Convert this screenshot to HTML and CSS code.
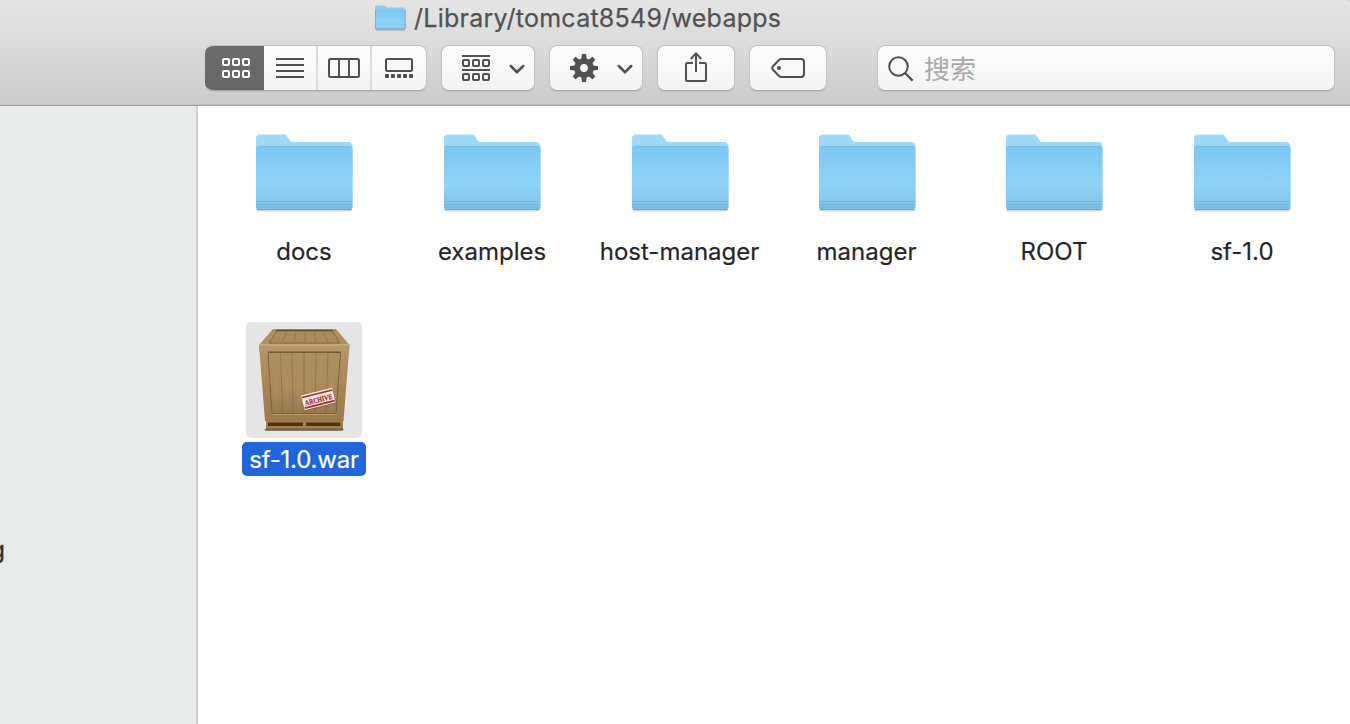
FILE: index.html
```
<!DOCTYPE html>
<html lang="zh">
<head>
<meta charset="utf-8">
<title>webapps</title>
<link rel="stylesheet" href="styles.css">
</head>
<body>
<svg class="defs" aria-hidden="true">
  <defs>
    <linearGradient id="front" x1="0" y1="0" x2="0" y2="1">
      <stop offset="0" stop-color="#7cc6f2"/><stop offset=".6" stop-color="#8fd3f7"/><stop offset=".78" stop-color="#8acbf0"/><stop offset="1" stop-color="#7dbfe6"/>
    </linearGradient>
    <linearGradient id="wood" x1="0" y1="0" x2="0" y2="1">
      <stop offset="0" stop-color="#ae8f61"/><stop offset=".6" stop-color="#ab8b5c"/><stop offset="1" stop-color="#987850"/>
    </linearGradient>
    <linearGradient id="frame" x1="0" y1="0" x2="0" y2="1">
      <stop offset="0" stop-color="#b59566"/><stop offset="1" stop-color="#9b7a4b"/>
    </linearGradient>
    <symbol id="folder" viewBox="0 0 100 80">
      <path d="M3 75.500H97Q98.500 78 96 78.500H4Q1.500 78 3 75.500Z" fill="#000" opacity=".13"/>
      <path d="M2 5.500Q2 1.500 6 1.500H30C34.500 1.500 34 9 39 9H94Q98.500 9 98.500 13.500V70H2Z" fill="#a0daf9"/>
      <path d="M2 16Q2 13 5 13H95.500Q98.500 13 98.500 16V74Q98.500 77 95.500 77H5Q2 77 2 74Z" fill="url(#front)"/>
      <path d="M4 13.400H96.500" stroke="#74b9e2" stroke-width=".8"/>
      <path d="M2 68.500H98.500M2 71.500H98.500M2 74H98.500" stroke="#6aaed8" stroke-width=".9" opacity=".65"/>
      <path d="M3 76.600H97.500" stroke="#609fc6" stroke-width=".9"/>
    </symbol>
    <symbol id="cells" viewBox="0 0 28 8">
      <g fill="none" stroke="currentColor" stroke-width="2"><rect x="1" y="1" width="6" height="6" rx="1"/><rect x="11" y="1" width="6" height="6" rx="1"/><rect x="21" y="1" width="6" height="6" rx="1"/></g>
    </symbol>
    <symbol id="chevron" viewBox="0 0 16 10"><path d="M1.800 2L8 8.200L14.200 2" fill="none" stroke="currentColor" stroke-width="2.500" stroke-linecap="round"/></symbol>
  </defs>
</svg>
<div class="window">
  <header class="chrome">
    <div class="title">
      <svg class="title-folder" viewBox="0 0 31 26">
        <path d="M1 24.500H30V25.500H1Z" fill="#777" opacity=".6"/>
        <path d="M0 2Q0 .500 1.500 .500H9.500L12 2.500H29Q30.500 2.500 30.500 4V23H0Z" fill="#8acdf3"/>
        <path d="M0 5H30.500V23Q30.500 24.500 29 24.500H1.500Q0 24.500 0 23Z" fill="url(#front)"/>
        <path d="M.400 5V23Q.400 24.200 1.500 24.200H29Q30.200 24.200 30.200 23V5" fill="none" stroke="#5fa9d5" stroke-width=".8"/>
        <path d="M1 21.500H30" stroke="#a1d8f5" stroke-width=".8"/>
      </svg>
      <span class="path">/Library/tomcat8549/webapps</span>
    </div>
    <div class="toolbar">
      <div class="views">
        <div class="view on"><svg width="28" height="20"><use href="#cells" width="28" height="8"/><use href="#cells" y="12" width="28" height="8"/></svg></div>
        <div class="view"><svg width="28" height="20"><path d="M0 1H28M0 7H28M0 13H28M0 19H28" stroke="currentColor" stroke-width="2"/></svg></div>
        <div class="view"><svg width="32" height="20"><path d="M11 1V19M21 1V19" stroke="currentColor" stroke-width="2"/><rect x="1" y="1" width="30" height="18" rx="1.500" fill="none" stroke="currentColor" stroke-width="2"/></svg></div>
        <div class="view"><svg width="28" height="20"><rect x="1" y="1" width="26" height="12" rx="1.500" fill="none" stroke="currentColor" stroke-width="2"/><g fill="currentColor"><rect y="16" width="4" height="4" rx=".8"/><rect x="6" y="16" width="4" height="4" rx=".8"/><rect x="12" y="16" width="4" height="4" rx=".8"/><rect x="18" y="16" width="4" height="4" rx=".8"/><rect x="24" y="16" width="4" height="4" rx=".8"/></g></svg></div>
      </div>
      <div class="button menu">
        <svg width="28" height="28"><path d="M0 2H28M0 16H28" stroke="currentColor" stroke-width="2"/><use href="#cells" y="5" width="28" height="8"/><use href="#cells" y="19" width="28" height="8"/></svg>
        <svg class="chevron" width="16" height="10"><use href="#chevron"/></svg>
      </div>
      <div class="button menu">
        <svg width="28" height="28" viewBox="-14 -14 28 28" fill="currentColor">
          <circle r="6.900" fill="none" stroke="currentColor" stroke-width="6"/>
          <path id="tooth" d="M-2.600-9L-2.100-13.500Q-2-14-1.500-14H1.500Q2-14 2.100-13.500L2.600-9ZM-2.600 9L-2.100 13.500Q-2 14-1.500 14H1.500Q2 14 2.100 13.500L2.600 9Z"/><use href="#tooth" transform="rotate(45)"/><use href="#tooth" transform="rotate(90)"/><use href="#tooth" transform="rotate(135)"/>
        </svg>
        <svg class="chevron" width="16" height="10"><use href="#chevron"/></svg>
      </div>
      <div class="button share">
        <svg width="22" height="30" fill="none" stroke="currentColor" stroke-width="2"><path d="M8 11H2.500Q1 11 1 12.500V27.500Q1 29 2.500 29H19.500Q21 29 21 27.500V12.500Q21 11 19.500 11H14M11 20V1.500"/><path d="M5.700 7L11 1.400L16.300 7"/></svg>
      </div>
      <div class="button tag">
        <svg width="34" height="20"><path d="M10.500 1H30Q33 1 33 4V16Q33 19 30 19H10.500Q9 19 8 18L2 11.800Q.400 10 2 8.200L8 2Q9 1 10.500 1Z" fill="none" stroke="currentColor" stroke-width="2"/><circle cx="8" cy="10" r="2" fill="currentColor"/></svg>
      </div>
      <div class="search">
        <svg width="26" height="26" fill="none" stroke="currentColor" stroke-width="2"><circle cx="10.500" cy="10.500" r="9.300"/><path d="M17 17L24.600 24.600" stroke-width="2.300"/></svg>
        <span>搜索</span>
      </div>
    </div>
  </header>
  <div class="body">
    <aside class="sidebar"><span class="clipped">g</span></aside>
    <main class="files">
      <div class="file"><div class="thumb"><svg class="folder"><use href="#folder"/></svg></div><span class="name">docs</span></div>
      <div class="file"><div class="thumb"><svg class="folder"><use href="#folder"/></svg></div><span class="name">examples</span></div>
      <div class="file"><div class="thumb"><svg class="folder"><use href="#folder"/></svg></div><span class="name">host-manager</span></div>
      <div class="file"><div class="thumb"><svg class="folder"><use href="#folder"/></svg></div><span class="name">manager</span></div>
      <div class="file"><div class="thumb"><svg class="folder"><use href="#folder"/></svg></div><span class="name">ROOT</span></div>
      <div class="file"><div class="thumb"><svg class="folder"><use href="#folder"/></svg></div><span class="name">sf-1.0</span></div>
      <div class="file selected"><div class="thumb">
        <svg width="116" height="116" viewBox="0 0 116 116">
          <path d="M18 107H98L96 109H20Z" fill="#3c3428" opacity=".6"/>
          <path d="M20 98H97V107.500H20Z" fill="#a3804d"/>
          <path d="M22 100.500H57V104H22ZM60 100.500H94.500V104H60Z" fill="#4b3318"/>
          <path d="M20 107H97" stroke="#6b4c26" stroke-width="1"/>
          <path d="M27 7H90L103.500 23H13Z" fill="#b08f60"/>
          <path d="M31 8.500H86L94 21H23Z" fill="#ab8a5a" stroke="#80613c" stroke-width=".8"/>
          <path d="M30.500 8.500H86.500" stroke="#6b4926" stroke-width="1.500"/>
          <path d="M41 9.500L36 20M50 9.500L48 20M59 9.500V20M68 9.500L70 20M77 9.500L82 20" stroke="#8e6d43" stroke-width=".7"/>
          <path d="M13 23H103.500L97.500 99H19Z" fill="url(#frame)"/>
          <path d="M22 30.500H94.500L90 91.500H26Z" fill="url(#wood)" stroke="#7d5f38" stroke-width="1"/>
          <path d="M34.500 31L36.500 91M46 31L47 91M58 31V91M70 31L69 91M82 31L80 91" stroke="#7d5d35" stroke-width=".8" opacity=".6"/>
          <path d="M28 34L31 88M40 36L42 85M53 34V86M64 36V87M76 34L74 86M88 34L85 88" stroke="#c09d69" stroke-width="1" opacity=".25"/>
          <path d="M13 22.500H103.500L103 29.500H13.500Z" fill="#b6976a"/>
          <path d="M13 22.800H103.500" stroke="#cbb084" stroke-width="1.200"/>
          <path d="M22 30H94.500" stroke="#765731" stroke-width="1"/>
          <path d="M26 92.500H91" stroke="#c6a36c" stroke-width=".8"/>
          <g transform="translate(72.500 77.500) rotate(-14)">
            <rect x="-15.500" y="-7" width="32" height="15" fill="#59401f" opacity=".5"/>
            <rect x="-16" y="-8" width="32" height="15" fill="#ececea"/>
            <path d="M-15.500-5.900H15.500M-15.500 5.100H15.500" stroke="#b9251f" stroke-width="1.700"/>
            <text class="stamp" text-anchor="middle" y="2.700" textLength="28" lengthAdjust="spacingAndGlyphs">ARCHIVE</text>
          </g>
        </svg>
      </div><span class="name">sf-1.0.war</span></div>
    </main>
  </div>
</div>
</body>
</html>
```
FILE: styles.css
```
* { box-sizing: border-box; }
body { margin: 0; background: #c9c9c9; font-family: Inter, "Noto Sans CJK SC", sans-serif; }
svg { display: block; flex: none; }
.defs { position: absolute; width: 0; height: 0; }
.window { width: 1350px; height: 724px; overflow: hidden; display: flex; flex-direction: column; }
.chrome { height: 106px; flex: none; background: linear-gradient(#e5e5e5, #cccccc); border-bottom: 1px solid #a4a4a4; box-shadow: inset 0 -1px #bebebe; border-top-right-radius: 4px; }
.title { height: 45px; display: flex; align-items: flex-start; padding: 5px 0 0 375px; gap: 8px; }
.title-folder { width: 31px; height: 26px; }
.path { font-size: 25px; line-height: 27px; color: #525252; white-space: nowrap; letter-spacing: .26px; -webkit-text-stroke: .25px #525252; }
.toolbar { display: flex; padding: 0 15px 0 205px; gap: 14px; color: #505050; }
.views, .button, .search { height: 46px; border: 1px solid #c2c2c2; border-bottom-color: #a9a9a9; border-radius: 8px; background: linear-gradient(#fdfdfd, #f3f3f3); box-shadow: 0 1px 1px rgba(0,0,0,.08); display: flex; align-items: center; }
.views { width: 222px; overflow: hidden; border-left: 0; }
.view { height: 46px; width: 54px; display: flex; align-items: center; justify-content: center; border-right: 2px solid #dcdcdc; }
.view.on { width: 59px; padding-left: 3px; background: linear-gradient(#6d6d6d, #646464); color: #fff; border: 0; }
.view:last-child { border: 0; padding-right: 1px; }
.menu { width: 94px; padding-left: 20px; gap: 18px; }
.menu .chevron { margin-left: .5px; margin-top: 1px; }
.share, .tag { width: 78px; justify-content: center; }
.share svg { margin-top: -2px; }
.search { flex: 1; margin-left: 36px; padding-left: 10px; gap: 10px; }
.search svg { margin-top: 2px; }
.search span { color: #a9a9a9; font: 26px/44px "Noto Sans CJK SC", sans-serif; }
.body { flex: 1; display: flex; min-height: 0; }
.sidebar { width: 198px; background: #e8ebea; border-right: 2px solid #cfcfcf; padding-top: 429px; overflow: hidden; }
.clipped { display: block; width: 5px; direction: rtl; font-size: 24px; line-height: 30px; color: #333; -webkit-text-stroke: .4px #333; }
.files { flex: 1; background: #fff; padding: 8px 0 0 12px; display: grid; grid-template-columns: 188px 188px 187px 187px 188px 188px; grid-auto-rows: 208px; align-content: start; }
.file { display: flex; flex-direction: column; align-items: center; gap: 4px; }
.thumb { width: 116px; height: 116px; border-radius: 5px; display: flex; align-items: center; justify-content: center; }
.folder { width: 100px; height: 80px; margin-top: 1px; }
.name { height: 34px; padding: 0 8px; border-radius: 5px; font-size: 24px; line-height: 35px; color: #262626; white-space: nowrap; -webkit-text-stroke: .2px currentColor; }
.selected .thumb { background: #e5e5e5; }
.selected .name { background: #2065da; color: #fff; letter-spacing: -.2px; padding: 0 7px; }
.stamp { font: bold 7.500px "Liberation Serif", serif; fill: #aa211c; stroke: #aa211c; stroke-width: .2px; }
```
